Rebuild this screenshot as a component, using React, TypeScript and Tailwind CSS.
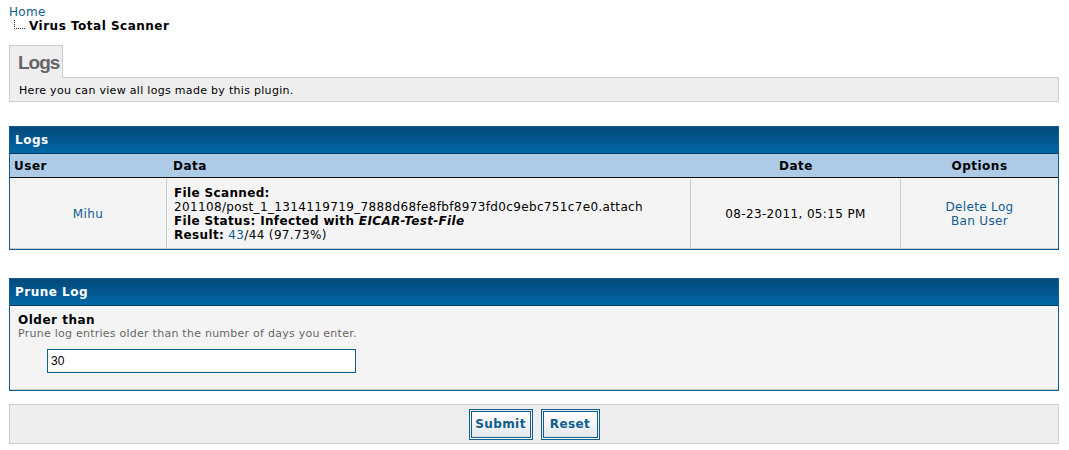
const link = 'text-[#0f5c8e] no-underline';

function SectionHead({ title }: { title: string }) {
  return (
    <div className="h-[27px] border-b border-[#0f3a5c] bg-linear-to-b from-[#03487a] to-[#0068a6] px-[5px] pt-[6px] font-bold tracking-[0.5px] text-white">
      {title}
    </div>
  );
}

export default function App() {
  return (
    <div className="min-h-[450px] bg-white pl-[9px] pr-[10px] pt-[5px] font-['DejaVu_Sans',Verdana,sans-serif] text-[12px] leading-[14px] tracking-[0.35px] text-black">
      {/* breadcrumb */}
      <div className={link}>Home</div>
      <div className="flex items-start">
        <span className="ml-[5px] mt-[1px] h-[9px] w-[11px] border-b border-l border-dotted border-[#333]" />
        <span className="ml-[4px] font-bold tracking-[0.5px]">Virus Total Scanner</span>
      </div>

      {/* tab + description */}
      <div className="mt-[12px] flex">
        <div className="relative z-10 -mb-px h-[33px] w-[54px] border border-b-0 border-[#ccc] bg-[#eee] pl-[8px] pt-[6px] font-['Liberation_Sans',Arial,sans-serif] text-[19px] font-bold leading-[22px] tracking-[-1px] text-[#666]">
          Logs
        </div>
      </div>
      <div className="h-[25px] border border-[#ccc] bg-[#eee] pl-[9px] pt-[6px] text-[11px] leading-[13px] tracking-[0.3px]">
        Here you can view all logs made by this plugin.
      </div>

      {/* logs table */}
      <div className="mt-[24px] border border-[#0f5c8e]">
        <SectionHead title="Logs" />
        <div className="grid h-[24px] grid-cols-[157px_524px_210px_1fr] border-b border-[#111] bg-[#adcbe7] pt-[5px] font-bold tracking-[0.5px]">
          <div className="pl-[4px]">User</div>
          <div className="pl-[6px]">Data</div>
          <div className="text-center">Date</div>
          <div className="text-center">Options</div>
        </div>
        <div className="grid h-[71px] grid-cols-[157px_524px_210px_1fr] border-b border-[#ccc] bg-[#f4f4f4]">
          <div className="flex items-center justify-center border-r border-[#ccc] pt-[2px]">
            <span className={link}>Mihu</span>
          </div>
          <div className="border-r border-[#ccc] pl-[7px] pt-[8px]">
            <div className="font-bold">File Scanned:</div>
            <div>201108/post_1_1314119719_7888d68fe8fbf8973fd0c9ebc751c7e0.attach</div>
            <div className="font-bold">
              File Status: Infected with <i>EICAR-Test-File</i>
            </div>
            <div>
              <b>Result:</b> <span className={link}>43</span>/44 (97.73%)
            </div>
          </div>
          <div className="flex items-center justify-center border-r border-[#ccc] pt-[2px]">
            08-23-2011, 05:15 PM
          </div>
          <div className="flex flex-col items-center justify-center pt-[2px]">
            <span className={link}>Delete Log</span>
            <span className={link}>Ban User</span>
          </div>
        </div>
      </div>

      {/* prune */}
      <div className="mt-[28px] border border-[#0f5c8e]">
        <SectionHead title="Prune Log" />
        <div className="h-[84px] border-b border-[#ccc] bg-[#f4f4f4] pl-[8px] pt-[7px]">
          <div className="font-bold tracking-[0.5px]">Older than</div>
          <div className="text-[11px] leading-[13px] tracking-[0.25px] text-[#666]">
            Prune log entries older than the number of days you enter.
          </div>
          <input
            defaultValue="30"
            className="ml-[29px] mt-[9px] h-[24px] w-[309px] border border-[#0f5c8e] bg-white px-[3px] font-['Liberation_Sans',Arial,sans-serif] text-[12px] tracking-normal outline-none"
          />
        </div>
      </div>

      {/* buttons */}
      <div className="mt-[13px] flex h-[40px] items-center justify-center gap-[8px] border border-[#ccc] bg-[#eee]">
        <button className="h-[31px] w-[64px] border-[3px] border-double border-[#0f5c8e] bg-linear-to-b from-white to-[#e4e8ec] text-[12px] font-bold tracking-[0.4px] text-[#0f5c8e]">
          Submit
        </button>
        <button className="h-[31px] w-[59px] border-[3px] border-double border-[#0f5c8e] bg-linear-to-b from-white to-[#e4e8ec] text-[12px] font-bold tracking-[0.4px] text-[#0f5c8e]">
          Reset
        </button>
      </div>
    </div>
  );
}
